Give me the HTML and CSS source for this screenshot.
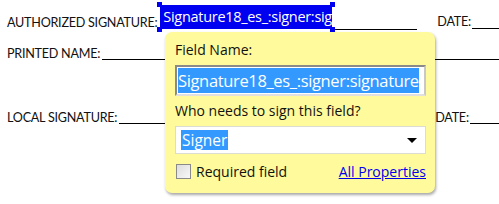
FILE: index.html
```html
<!DOCTYPE html>
<html lang="en">
<head>
  <meta charset="UTF-8" />
  <title>Signature Field</title>
  <link rel="stylesheet" href="styles.css">
</head>
<body>
  <div class="sheet">
    <div class="row row-auth">
      <span class="label">AUTHORIZED SIGNATURE:</span>
      <span class="sig-field">
        <span class="sig-text">Signature18_es_:signer:signature</span>
        <i class="handle tl"></i><i class="handle tr"></i>
        <i class="handle bl"></i><i class="handle br"></i>
      </span>
      <span class="line auth-line"></span>
      <span class="label date">DATE:</span>
      <span class="line date-line"></span>
    </div>

    <div class="row row-printed">
      <span class="label">PRINTED NAME:</span>
      <span class="line printed-line"></span>
    </div>

    <div class="row row-local">
      <span class="label">LOCAL SIGNATURE:</span>
      <span class="line local-line"></span>
      <span class="label date">DATE:</span>
      <span class="line date-line"></span>
    </div>
  </div>

  <div class="popup">
    <div class="popup-label">Field Name:</div>
    <div class="name-box"><span class="selected">Signature18_es_:signer:signature</span></div>
    <div class="popup-label">Who needs to sign this field?</div>
    <div class="select-box">
      <span class="selected">Signer</span>
      <span class="arrow"></span>
    </div>
    <div class="popup-foot">
      <label class="check"><span class="box"></span>Required field</label>
      <a href="#" class="props">All Properties</a>
    </div>
  </div>
</body>
</html>
```

FILE: styles.css
```css
body {
  margin: 0;
  background: #fff;
  width: 499px;
  height: 204px;
  overflow: hidden;
  position: relative;
  font-family: 'Open Sans', 'Noto Sans', sans-serif;
}

.sheet {
  padding-left: 7px;
}

.row {
  display: flex;
  align-items: flex-end;
  white-space: nowrap;
}

.label {
  font-family: Lato, 'Liberation Sans', sans-serif;
  font-size: 12.6px;
  letter-spacing: -0.25px;
  color: #111;
  line-height: 13px;
}

.line {
  height: 1px;
  background: #000;
}

.row-auth {
  height: 31px;
}

.row-auth .label {
  margin-bottom: 2px;
}

.sig-field {
  position: relative;
  width: 172px;
  height: 24px;
  margin-left: 3px;
  margin-bottom: 2px;
  background: #0000f0;
}

.sig-text {
  display: block;
  width: 170px;
  overflow: hidden;
  color: #fff;
  font-size: 14.5px;
  letter-spacing: -0.3px;
  line-height: 24px;
  padding-left: 3px;
}

.handle {
  position: absolute;
  width: 5px;
  height: 5px;
  background: #0000f0;
}

.tl { left: -3px; top: -3px; }
.tr { right: -3px; top: -3px; }
.bl { left: -3px; bottom: -3px; }
.br { right: -3px; bottom: -3px; }

.auth-line {
  width: 85px;
  margin-bottom: 1px;
}

.date {
  margin-left: 20px;
  margin-right: 1px;
}

.row-auth .date {
  margin-bottom: 3px;
}

.date-line {
  flex: 1;
  margin-bottom: 2px;
}

.row-printed {
  height: 31px;
}

.row-printed .label {
  margin-bottom: 2px;
}

.printed-line {
  flex: 1;
  margin-left: 2px;
  margin-bottom: 2px;
}

.row-local {
  height: 64px;
}

.row-local .label {
  margin-bottom: 2px;
}

.local-line {
  width: 296px;
  margin-left: 2px;
  margin-bottom: 2px;
}

.popup {
  position: absolute;
  left: 165px;
  top: 32px;
  width: 251px;
  height: 153px;
  padding: 8px 9px 0 10px;
  background: #fffb9c;
  border-radius: 7px;
  box-shadow: 1px 2px 3px rgba(0, 0, 0, 0.35);
  color: #111;
  font-size: 14px;
}

.popup-label {
  line-height: 19px;
}

.name-box {
  margin-top: 6px;
  height: 27px;
  border: 2px solid #8a8a8a;
  border-right-color: #c8c8c8;
  border-bottom-color: #e0e0e0;
  background: #fff;
  overflow: hidden;
  white-space: nowrap;
  margin-bottom: 5px;
}

.name-box .selected {
  display: inline-block;
  margin: 1px 0 0 1px;
  font-size: 16.5px;
  letter-spacing: -0.35px;
  line-height: 25px;
}

.selected {
  background: #3399ff;
  color: #fff;
}

.select-box {
  margin-top: 6px;
  height: 26px;
  border: 1px solid #dcdcd0;
  background: #fff;
  display: flex;
  align-items: center;
  justify-content: space-between;
  padding: 0 8px 0 5px;
}

.select-box .selected {
  font-size: 15.5px;
  line-height: 20px;
  padding: 0 1px;
}

.arrow {
  width: 0;
  height: 0;
  border-left: 5px solid transparent;
  border-right: 5px solid transparent;
  border-top: 5px solid #000;
}

.popup-foot {
  margin-top: 8px;
  display: flex;
  justify-content: space-between;
  align-items: center;
}

.check {
  display: flex;
  align-items: center;
  gap: 5px;
  margin-left: 1px;
}

.box {
  width: 13px;
  height: 13px;
  border: 1px solid #8a8a8a;
  background: linear-gradient(135deg, #dcdcdc, #f8f8f8);
}

.props {
  color: #0000ee;
}
```
